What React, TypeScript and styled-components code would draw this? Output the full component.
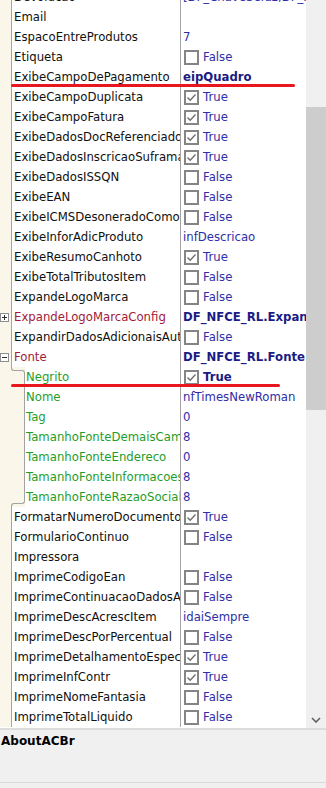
import React from "react";
import styled, { createGlobalStyle, css } from "styled-components";

const GlobalStyle = createGlobalStyle`
  *, *::before, *::after { box-sizing: border-box; }
  html, body { margin: 0; padding: 0; background: #ffffff; }
  body { font-family: "DejaVu Sans", Tahoma, Verdana, sans-serif; }
`;

type Tone = "plain" | "object" | "sub";

type Prop = {
  name: string;
  value?: string;
  bool?: boolean;
  strong?: boolean;
  tone?: Tone;
  expander?: "plus" | "minus";
  mark?: number;
  edge?: "first" | "last";
};

const props: Prop[] = [
  { name: "Devolucao", value: "[DF_ChaveSefaz,DF_Recebedor]" },
  { name: "Email", value: "" },
  { name: "EspacoEntreProdutos", value: "7" },
  { name: "Etiqueta", bool: false },
  { name: "ExibeCampoDePagamento", value: "eipQuadro", strong: true, mark: 284 },
  { name: "ExibeCampoDuplicata", bool: true },
  { name: "ExibeCampoFatura", bool: true },
  { name: "ExibeDadosDocReferenciados", bool: true },
  { name: "ExibeDadosInscricaoSuframa", bool: true },
  { name: "ExibeDadosISSQN", bool: false },
  { name: "ExibeEAN", bool: false },
  { name: "ExibeICMSDesoneradoComoDesconto", bool: false },
  { name: "ExibeInforAdicProduto", value: "infDescricao" },
  { name: "ExibeResumoCanhoto", bool: true },
  { name: "ExibeTotalTributosItem", bool: false },
  { name: "ExpandeLogoMarca", bool: false },
  { name: "ExpandeLogoMarcaConfig", value: "DF_NFCE_RL.ExpandeLogoMarcaConfig", strong: true, tone: "object", expander: "plus" },
  { name: "ExpandirDadosAdicionaisAuto", bool: false },
  { name: "Fonte", value: "DF_NFCE_RL.Fonte", strong: true, tone: "object", expander: "minus" },
  { name: "Negrito", bool: true, strong: true, tone: "sub", mark: 269, edge: "first" },
  { name: "Nome", value: "nfTimesNewRoman", tone: "sub" },
  { name: "Tag", value: "0", tone: "sub" },
  { name: "TamanhoFonteDemaisCampos", value: "8", tone: "sub" },
  { name: "TamanhoFonteEndereco", value: "0", tone: "sub" },
  { name: "TamanhoFonteInformacoesComplementares", value: "8", tone: "sub" },
  { name: "TamanhoFonteRazaoSocial", value: "8", tone: "sub", edge: "last" },
  { name: "FormatarNumeroDocumento", bool: true },
  { name: "FormularioContinuo", bool: false },
  { name: "Impressora", value: "" },
  { name: "ImprimeCodigoEan", bool: false },
  { name: "ImprimeContinuacaoDadosAdicionaisPrimeiraPagina", bool: false },
  { name: "ImprimeDescAcrescItem", value: "idaiSempre" },
  { name: "ImprimeDescPorPercentual", bool: false },
  { name: "ImprimeDetalhamentoEspecifico", bool: true },
  { name: "ImprimeInfContr", bool: true },
  { name: "ImprimeNomeFantasia", bool: false },
  { name: "ImprimeTotalLiquido", bool: false },
];

const LINE = "#a3a3a3";
const GUTTER_BG = "#faf6ea";

const Screen = styled.div`
  width: 326px;
  height: 788px;
  overflow: hidden;
  display: flex;
  flex-direction: column;
  background: #f0f0f0;
`;

const Inspector = styled.div`
  margin-top: -13px;
  height: 741px;
  flex: none;
  display: flex;
  background: #ffffff;
`;

const Viewport = styled.div`
  flex: 1;
  min-width: 0;
  overflow: hidden;
  display: flex;
  flex-direction: column;
`;

const Row = styled.div<{ $nested: boolean }>`
  position: relative;
  height: 20px;
  flex: none;
  display: grid;
  grid-template-columns: ${(p) => (p.$nested ? "25px 155px" : "12px 168px")} 1px 1fr;
`;

const Gutter = styled.div<{ $edge?: "first" | "last" }>`
  position: relative;
  background: ${GUTTER_BG};
  border-right: 1px solid ${LINE};
  display: flex;
  align-items: center;
  ${(p) =>
    p.$edge === "first" &&
    css`
      border-right-color: transparent;
      &::before {
        content: "";
        position: absolute;
        left: 11px;
        top: 0;
        width: 7px;
        height: 4px;
        border-left: 1px solid ${LINE};
        border-bottom: 1px solid ${LINE};
        border-bottom-left-radius: 3px;
      }
      &::after {
        content: "";
        position: absolute;
        left: 17px;
        top: 3px;
        width: 8px;
        height: 17px;
        border-top: 1px solid ${LINE};
        border-right: 1px solid ${LINE};
        border-top-right-radius: 3px;
      }
    `}
  ${(p) =>
    p.$edge === "last" &&
    css`
      border-right-color: transparent;
      &::before {
        content: "";
        position: absolute;
        left: 17px;
        top: 0;
        width: 8px;
        height: 17px;
        border-right: 1px solid ${LINE};
        border-bottom: 1px solid ${LINE};
        border-bottom-right-radius: 3px;
      }
      &::after {
        content: "";
        position: absolute;
        left: 11px;
        top: 16px;
        width: 7px;
        height: 4px;
        border-left: 1px solid ${LINE};
        border-top: 1px solid ${LINE};
        border-top-left-radius: 3px;
      }
    `}
`;

const Expander = styled.span<{ $open: boolean }>`
  position: relative;
  width: 9px;
  height: 9px;
  border: 1px solid #8e8e8e;
  background: #ffffff;
  &::before {
    content: "";
    position: absolute;
    left: 1px;
    right: 1px;
    top: 3px;
    height: 1px;
    background: #303030;
  }
  ${(p) =>
    !p.$open &&
    css`
      &::after {
        content: "";
        position: absolute;
        top: 1px;
        bottom: 1px;
        left: 3px;
        width: 1px;
        background: #303030;
      }
    `}
`;

const toneColor: Record<Tone, string> = {
  plain: "#101010",
  object: "#a3193a",
  sub: "#1f9d2a",
};

const Name = styled.div<{ $tone: Tone }>`
  padding-left: ${(p) => (p.$tone === "sub" ? "1px" : "2px")};
  font-size: 11.7px;
  line-height: 20px;
  white-space: nowrap;
  overflow: hidden;
  color: ${(p) => toneColor[p.$tone]};
`;

const Divider = styled.div`
  background: ${LINE};
`;

const Value = styled.div<{ $strong: boolean }>`
  display: flex;
  align-items: center;
  gap: 4px;
  padding-left: 2px;
  overflow: hidden;
  white-space: nowrap;
  font-size: 11.7px;
  line-height: 20px;
  color: ${(p) => (p.$strong ? "#1b1b84" : "#2e2ea8")};
  font-weight: ${(p) => (p.$strong ? 700 : 400)};
`;

const Check = styled.span`
  flex: none;
  margin-left: 1px;
  width: 15px;
  height: 15px;
  border: 2px solid #858585;
  background: #ffffff;
  display: flex;
  align-items: center;
  justify-content: center;
`;

const Mark = styled.div<{ $w: number }>`
  position: absolute;
  left: 11px;
  top: 17px;
  height: 3px;
  width: ${(p) => p.$w}px;
  background: #e8161f;
  border-radius: 2px;
  z-index: 2;
`;

const ScrollBar = styled.div`
  width: 20px;
  flex: none;
  display: flex;
  flex-direction: column;
  background: #f0f0f0;
`;

const ArrowButton = styled.div`
  height: 17px;
  flex: none;
  display: flex;
  align-items: center;
  justify-content: center;
`;

const Track = styled.div`
  flex: 1;
  display: flex;
  flex-direction: column;
`;

const Thumb = styled.div`
  height: 303px;
  flex: none;
  background: #cdcdcd;
`;

const Panel = styled.div`
  flex: 1;
  display: flex;
  flex-direction: column;
  background: #f0f0f0;
  border-top: 2px solid #dcdcdc;
`;

const PanelTitle = styled.div`
  height: 53px;
  flex: none;
  padding: 4px 1px 0;
  border-bottom: 1px solid #d9d9d9;
  font-size: 12px;
  line-height: 14px;
  font-weight: 700;
  color: #000000;
`;

const CheckMark = () => (
  <svg width="11" height="11" viewBox="0 0 11 11">
    <polyline points="1.5,5.5 4.2,8.3 9.5,2.5" fill="none" stroke="#6e6e6e" strokeWidth="1.4" />
  </svg>
);

const Chevron = ({ up }: { up?: boolean }) => (
  <svg width="10" height="6" viewBox="0 0 10 6">
    <polyline
      points={up ? "1,5 5,1 9,5" : "1,1 5,5 9,1"}
      fill="none"
      stroke="#606060"
      strokeWidth="1.6"
    />
  </svg>
);

const PropertyRow = ({ p }: { p: Prop }) => {
  const tone = p.tone ?? "plain";
  const nested = tone === "sub";
  return (
    <Row $nested={nested}>
      <Gutter $edge={p.edge}>
        {p.expander && <Expander $open={p.expander === "minus"} />}
      </Gutter>
      <Name $tone={tone}>{p.name}</Name>
      <Divider />
      <Value $strong={!!p.strong}>
        {p.bool !== undefined ? (
          <>
            <Check>{p.bool && <CheckMark />}</Check>
            <span>{p.bool ? "True" : "False"}</span>
          </>
        ) : (
          <span>{p.value}</span>
        )}
      </Value>
      {p.mark && <Mark $w={p.mark} />}
    </Row>
  );
};

export default function App() {
  const scrollTop = 103;
  return (
    <>
      <GlobalStyle />
      <Screen>
        <Inspector>
          <Viewport>
            {props.map((p) => (
              <PropertyRow key={p.name} p={p} />
            ))}
          </Viewport>
          <ScrollBar>
            <ArrowButton>
              <Chevron up />
            </ArrowButton>
            <Track>
              <Thumb style={{ marginTop: scrollTop }} />
            </Track>
            <ArrowButton>
              <Chevron />
            </ArrowButton>
          </ScrollBar>
        </Inspector>
        <Panel>
          <PanelTitle>AboutACBr</PanelTitle>
        </Panel>
      </Screen>
    </>
  );
}
